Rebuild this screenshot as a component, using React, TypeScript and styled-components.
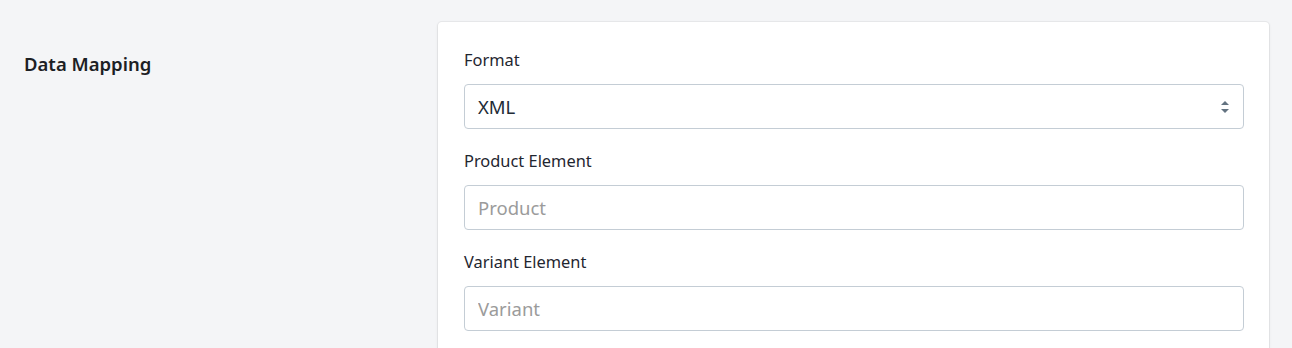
import React from "react";
import styled, {createGlobalStyle} from "styled-components";

const GlobalStyle = createGlobalStyle`
  html, body {
    margin: 0;
    padding: 0;
    background: #f4f5f7;
    font-family: "Noto Sans", "Open Sans", sans-serif;
    color: #212b36;
  }
`

const Page = styled.div`
  display: flex;
  align-items: flex-start;
  padding: 22px 23px 0 24px;
  height: 348px;
  box-sizing: border-box;
  overflow: hidden;
`

const Aside = styled.div`
  flex: 0 0 414px;
`

const SectionTitle = styled.h2`
  margin: 31px 0 0;
  font-size: 18.5px;
  line-height: 22px;
  font-weight: 600;
  color: #1c2024;
`

const Card = styled.div`
  flex: 1;
  background: #fff;
  border-radius: 4px;
  box-shadow: 0 0 0 1px rgba(63, 63, 68, 0.06), 0 1px 3px rgba(63, 63, 68, 0.12);
  padding: 26px 25px 30px 26px;
`

const Field = styled.div`
  margin-bottom: 20px;
`

const Label = styled.label`
  display: block;
  font-size: 16.4px;
  line-height: 24px;
  margin-bottom: 12px;
  color: #1f2630;
`

const SelectBox = styled.div`
  position: relative;
  display: flex;
  align-items: center;
  height: 45px;
  box-sizing: border-box;
  border: 1px solid #c4cdd5;
  border-radius: 4px;
  padding: 0 13px;
  font-size: 18.5px;
  color: #212b36;
  background: #fff;
`

const SelectValue = styled.span`
  flex: 1;
`

const Input = styled.input`
  display: block;
  width: 100%;
  height: 45px;
  box-sizing: border-box;
  border: 1px solid #c4cdd5;
  border-radius: 4px;
  padding: 0 13px;
  font-family: inherit;
  font-size: 18.5px;
  color: #212b36;
  background: #fff;
  outline: none;

  &::placeholder {
    color: #9b9b9b;
  }
`

const Caret = () => (
    <svg width="10" height="14" viewBox="0 0 10 14">
        <path d="M5 1 L9 5 H1 Z" fill="#637381" />
        <path d="M5 13 L1 9 H9 Z" fill="#637381" />
    </svg>
)

export default function App() {
    return (
        <>
            <GlobalStyle />
            <Page>
                <Aside>
                    <SectionTitle>Data Mapping</SectionTitle>
                </Aside>
                <Card>
                    <Field>
                        <Label>Format</Label>
                        <SelectBox>
                            <SelectValue>XML</SelectValue>
                            <Caret />
                        </SelectBox>
                    </Field>
                    <Field>
                        <Label>Product Element</Label>
                        <Input placeholder="Product" />
                    </Field>
                    <Field>
                        <Label>Variant Element</Label>
                        <Input placeholder="Variant" />
                    </Field>
                </Card>
            </Page>
        </>
    )
}
